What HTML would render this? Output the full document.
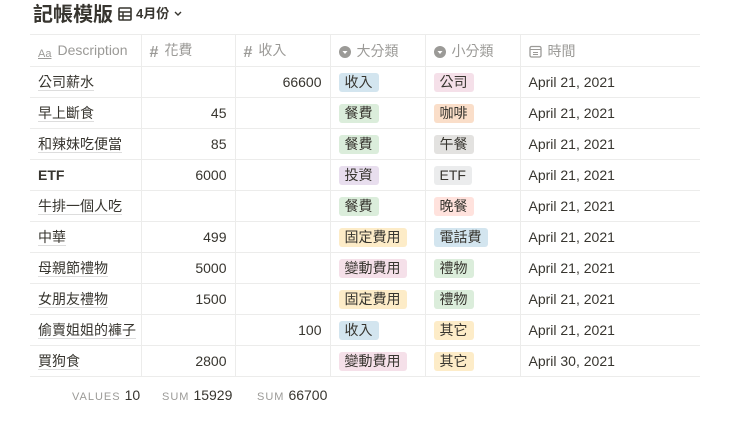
<html><head><style>
body{margin:0;background:#fff;font-family:"Liberation Sans","Noto Sans CJK TC",sans-serif;color:#37352f;width:740px;height:424px;overflow:hidden;position:relative}
.title{position:absolute;left:33px;top:2px;font-size:20px;font-weight:bold;line-height:26px}
.view{position:absolute;left:118px;top:5px;font-size:13px;font-weight:bold;line-height:18px;display:flex;align-items:center;gap:4px}
table{position:absolute;left:30px;top:34px;border-collapse:collapse;font-size:14px;table-layout:fixed;width:670px}
td{height:31px;border:1px solid #ececeb;padding:0 8px;white-space:nowrap;overflow:hidden;box-sizing:border-box}
tr td:first-child{border-left:none}
tr td:last-child{border-right:none}
tr:first-child td{color:#9b9a97;border-top:1px solid #ececeb;height:32px}
td.n{text-align:right}
.d span{border-bottom:1px solid #ddd}
.t{display:inline-block;padding:0 6px;border-radius:3px;line-height:19px;font-size:14px}
.bl{background:#d3e5ef}.gr{background:#dbeddb}.pk{background:#f5e0e9}.or{background:#fadec9}.gy{background:#e3e2e0}.pu{background:#e8deee}.ye{background:#fdecc8}.rd{background:#ffe2dd}
.ic{display:inline-block;vertical-align:-2px;margin-right:6px}
.foot{position:absolute;top:387px;font-size:14px;color:#37352f}
.foot small{font-size:11px;color:#9b9a97;letter-spacing:1px;margin-right:4px}
</style></head><body>
<div class="title">記帳模版</div>
<div class="view"><svg width="14" height="14" viewBox="0 0 14 14"><rect x="1" y="1" width="12" height="12" rx="1" fill="none" stroke="#37352f" stroke-width="1.6"/><path d="M1 5h12M1 9h12M5 5v8" stroke="#37352f" stroke-width="1.4"/></svg>4月份<svg width="10" height="8" viewBox="0 0 10 8"><path d="M2 2l3 3 3-3" fill="none" stroke="#37352f" stroke-width="1.4"/></svg></div>
<table>
<colgroup><col style="width:111px"><col style="width:94px"><col style="width:95px"><col style="width:95px"><col style="width:95px"><col style="width:180px"></colgroup>
<tr><td><span class="ic" style="font-size:11px;text-decoration:underline">Aa</span>Description</td><td><span class="ic" style="font-weight:bold;font-size:16px">#</span>花費</td><td><span class="ic" style="font-weight:bold;font-size:16px">#</span>收入</td><td><svg class="ic" width="12" height="12"><circle cx="6" cy="6" r="6" fill="#9b9a97"/><path d="M3.5 5l2.5 3 2.5-3z" fill="#fff"/></svg>大分類</td><td><svg class="ic" width="12" height="12"><circle cx="6" cy="6" r="6" fill="#9b9a97"/><path d="M3.5 5l2.5 3 2.5-3z" fill="#fff"/></svg>小分類</td><td><svg class="ic" width="13" height="13"><rect x="1" y="1.5" width="11" height="10.5" rx="1.5" fill="none" stroke="#9b9a97" stroke-width="1.3"/><path d="M1 4.5h11M4 7.5h5M4 9.5h5" stroke="#9b9a97"/></svg>時間</td></tr>
<tr><td class="d"><span>公司薪水</span></td><td></td><td class="n">66600</td><td><span class="t bl">收入</span></td><td><span class="t pk">公司</span></td><td>April 21, 2021</td></tr>
<tr><td class="d"><span>早上斷食</span></td><td class="n">45</td><td></td><td><span class="t gr">餐費</span></td><td><span class="t or">咖啡</span></td><td>April 21, 2021</td></tr>
<tr><td class="d"><span>和辣妹吃便當</span></td><td class="n">85</td><td></td><td><span class="t gr">餐費</span></td><td><span class="t gy">午餐</span></td><td>April 21, 2021</td></tr>
<tr><td class="d"><span style="font-weight:bold;border:none">ETF</span></td><td class="n">6000</td><td></td><td><span class="t pu">投資</span></td><td><span class="t gy" style="background:#ebeced">ETF</span></td><td>April 21, 2021</td></tr>
<tr><td class="d"><span>牛排一個人吃</span></td><td></td><td></td><td><span class="t gr">餐費</span></td><td><span class="t rd">晚餐</span></td><td>April 21, 2021</td></tr>
<tr><td class="d"><span>中華</span></td><td class="n">499</td><td></td><td><span class="t ye">固定費用</span></td><td><span class="t bl">電話費</span></td><td>April 21, 2021</td></tr>
<tr><td class="d"><span>母親節禮物</span></td><td class="n">5000</td><td></td><td><span class="t pk">變動費用</span></td><td><span class="t gr">禮物</span></td><td>April 21, 2021</td></tr>
<tr><td class="d"><span>女朋友禮物</span></td><td class="n">1500</td><td></td><td><span class="t ye">固定費用</span></td><td><span class="t gr">禮物</span></td><td>April 21, 2021</td></tr>
<tr><td class="d"><span>偷賣姐姐的褲子</span></td><td></td><td class="n">100</td><td><span class="t bl">收入</span></td><td><span class="t ye">其它</span></td><td>April 21, 2021</td></tr>
<tr><td class="d"><span>買狗食</span></td><td class="n">2800</td><td></td><td><span class="t pk">變動費用</span></td><td><span class="t ye">其它</span></td><td>April 30, 2021</td></tr>
</table>
<div class="foot" style="left:72px"><small>VALUES</small>10</div>
<div class="foot" style="left:162px"><small>SUM</small>15929</div>
<div class="foot" style="left:257px"><small>SUM</small>66700</div>
</body></html>
